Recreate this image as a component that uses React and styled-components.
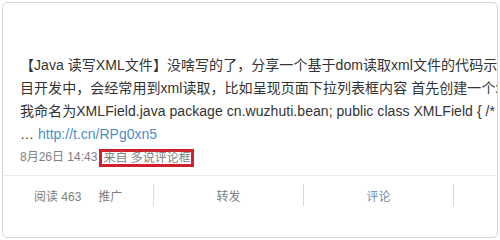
import React from 'react';
import styled, { createGlobalStyle } from 'styled-components';

const GlobalStyle = createGlobalStyle`
  html, body {
    margin: 0;
    padding: 0;
    background: #ffffff;
  }
  body {
    font-family: "Liberation Sans", Arial, "Noto Sans CJK SC", sans-serif;
  }
`;

const Page = styled.div`
  padding: 2px;
  width: 500px;
  height: 240px;
  box-sizing: border-box;
`;

const Card = styled.div`
  width: 496px;
  height: 236px;
  box-sizing: border-box;
  border: 1px solid #d4d1e1;
  border-radius: 5px;
  background: #fff;
  overflow: hidden;
  display: flex;
  flex-direction: column;
`;

const Body = styled.div`
  padding: 51px 0 0 17px;
  font-size: 14px;
  line-height: 23px;
  color: #333;
`;

const Line = styled.div`
  white-space: nowrap;
  overflow: hidden;
  letter-spacing: 0.05px;
`;

const Link = styled.a`
  color: #4d8fc4;
  text-decoration: none;
  letter-spacing: 0;
`;

const Meta = styled.div`
  display: flex;
  align-items: center;
  height: 23px;
  font-size: 12px;
  color: #808080;
  white-space: nowrap;
`;

const Source = styled.span`
  display: inline-block;
  margin-left: 2px;
  padding: 0 0 0 1px;
  border: 3px solid #d2202b;
  line-height: 12px;
  color: #808080;
`;

const Footer = styled.div`
  margin-top: 6px;
  border-top: 1px solid #ebebeb;
  padding-top: 8px;
  display: flex;
`;

const Tab = styled.div`
  width: ${p => p.$w}px;
  height: 22px;
  box-sizing: border-box;
  display: flex;
  align-items: center;
  justify-content: ${p => (p.$first ? 'flex-start' : 'center')};
  padding-left: ${p => (p.$first ? 31 : 0)}px;
  gap: 17px;
  border-left: ${p => (p.$first ? 'none' : '1px solid #d9d9d9')};
  font-size: 12px;
  color: ${p => (p.$active ? '#6b8fae' : '#808080')};
`;

export default function App() {
  return (
    <Page>
      <GlobalStyle />
      <Card>
        <Body>
          <Line>【Java 读写XML文件】没啥写的了，分享一个基于dom读取xml文件的代码示</Line>
          <Line>目开发中，会经常用到xml读取，比如呈现页面下拉列表框内容 首先创建一个x</Line>
          <Line>我命名为XMLField.java package cn.wuzhuti.bean; public class XMLField {'{'} /*</Line>
          <Line>
            … <Link href="#">http://t.cn/RPg0xn5</Link>
          </Line>
          <Meta>
            8月26日 14:43<Source>来自 多说评论框</Source>
          </Meta>
        </Body>
        <Footer>
          <Tab $first $w={150}>
            <span>阅读 463</span>
            <span>推广</span>
          </Tab>
          <Tab $w={150}>转发</Tab>
          <Tab $w={150} $active>评论</Tab>
          <Tab $w={44}></Tab>
        </Footer>
      </Card>
    </Page>
  );
}
